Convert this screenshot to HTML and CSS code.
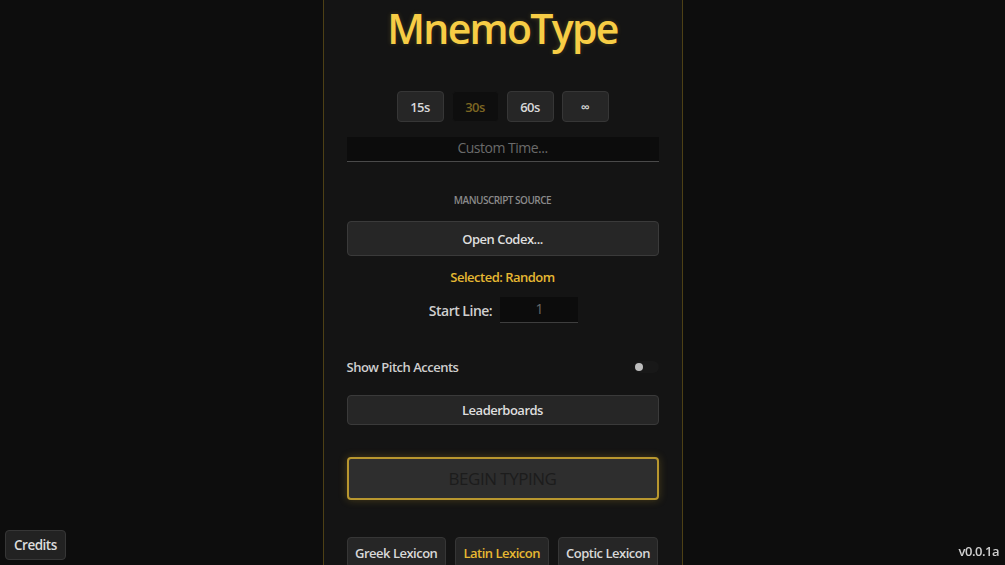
FILE: index.html
```html
<html>
<head>
  <title>MnemoType</title>
  <meta charset="UTF-8">
  <link rel="stylesheet" href="styles.css">
</head>
<body>
  <main class="panel">
    <h1 class="logo">MnemoType</h1>

    <div class="times">
      <button class="chip">15s</button>
      <button class="chip active">30s</button>
      <button class="chip">60s</button>
      <button class="chip">∞</button>
    </div>
    <input class="custom" type="text" placeholder="Custom Time...">

    <p class="section">MANUSCRIPT SOURCE</p>
    <button class="wide codex">Open Codex...</button>
    <p class="selected">Selected: Random</p>
    <div class="startline">
      <label>Start Line:</label>
      <input class="line" type="text" value="1">
    </div>

    <div class="toggle-row">
      <span>Show Pitch Accents</span>
      <span class="toggle"><span class="knob"></span></span>
    </div>
    <button class="wide boards">Leaderboards</button>

    <button class="begin">BEGIN TYPING</button>

    <div class="lexicons">
      <button class="chip lex">Greek Lexicon</button>
      <button class="chip lex current">Latin Lexicon</button>
      <button class="chip lex">Coptic Lexicon</button>
    </div>
  </main>

  <button class="credits">Credits</button>
  <span class="version">v0.0.1a</span>
</body>
</html>
```

FILE: styles.css
```css
html, body {
  height: 100%;
}
body {
  margin: 0;
  background: #0d0d0d;
  color: #d6d6d6;
  font-family: "Open Sans", "Noto Sans", sans-serif;
  letter-spacing: -0.5px;
  overflow: hidden;
}
button, input {
  font-family: inherit;
  font-weight: 600;
  letter-spacing: -0.5px;
}
.panel {
  box-sizing: border-box;
  width: 360px;
  min-height: 640px;
  margin: 0 auto;
  padding: 0 23px;
  background: #141414;
  border-left: 1px solid #4d4015;
  border-right: 1px solid #4d4015;
  display: flex;
  flex-direction: column;
  align-items: center;
}
.logo {
  margin: 3px 0 0;
  font-size: 41px;
  line-height: 50px;
  font-weight: 600;
  letter-spacing: -1.7px;
  color: #f7cd45;
  text-shadow: 0 0 5px rgba(247, 205, 69, 0.2);
}
.times {
  display: flex;
  gap: 8px;
  margin-top: 38px;
}
.chip {
  flex: none;
  height: 31px;
  min-width: 47px;
  padding: 0 10px;
  background: #262626;
  border: 1px solid #363636;
  border-radius: 4px;
  color: #d8d8d8;
  font-size: 13px;
  white-space: nowrap;
}
.chip.active {
  background: #0e0e0e;
  border-color: #141414;
  color: #7d6622;
}
.custom {
  box-sizing: border-box;
  width: 100%;
  height: 25px;
  margin-top: 15px;
  padding: 0 0 3px;
  background: #0c0c0c;
  border: 0;
  border-bottom: 1px solid #4a4a4a;
  text-align: center;
  font-size: 14px;
  font-weight: 400;
  color: #ccc;
  outline: none;
}
.custom::placeholder {
  color: #6a6a6a;
}
.section {
  margin: 31px 0 0;
  font-size: 10px;
  line-height: 14px;
  font-weight: 600;
  color: #8a8a8a;
}
.wide {
  width: 100%;
  background: #262626;
  border: 1px solid #3a3a3a;
  border-radius: 4px;
  color: #dedede;
  font-size: 13px;
}
.codex {
  height: 35px;
  margin-top: 14px;
}
.selected {
  margin: 12px 0 0;
  font-size: 13px;
  line-height: 18px;
  font-weight: 600;
  color: #e6b832;
}
.startline {
  display: flex;
  align-items: center;
  gap: 8px;
  margin-top: 11px;
  margin-left: 2px;
  font-size: 14px;
  font-weight: 600;
  color: #cfcfcf;
}
.line {
  box-sizing: border-box;
  width: 78px;
  height: 26px;
  padding: 0 0 2px;
  background: #0c0c0c;
  border: 0;
  border-bottom: 1px solid #3e3e3e;
  text-align: center;
  font-size: 14px;
  font-weight: 400;
  color: #6a6a6a;
  outline: none;
}
.toggle-row {
  width: 100%;
  display: flex;
  justify-content: space-between;
  align-items: center;
  margin-top: 35px;
  font-size: 13px;
  font-weight: 600;
  color: #cfcfcf;
}
.toggle {
  width: 24px;
  height: 12px;
  border-radius: 6px;
  background: #181818;
  display: flex;
  align-items: center;
  padding-left: 1px;
}
.knob {
  width: 8px;
  height: 8px;
  border-radius: 50%;
  background: #bdbdbd;
}
.boards {
  height: 30px;
  margin-top: 19px;
}
.begin {
  width: 100%;
  height: 43px;
  margin-top: 32px;
  background: #2e2e2e;
  border: 2px solid #b8972f;
  border-radius: 4px;
  box-shadow: 0 0 8px rgba(200, 160, 40, 0.3);
  color: #1c1c1c;
  font-size: 17px;
  font-weight: 400;
}
.lexicons {
  width: 100%;
  display: flex;
  gap: 9px;
  margin-top: 37px;
}
.lex {
  flex: 1 1 auto;
  padding: 0 6px;
}
.lex.current {
  color: #e6b832;
}
.credits {
  position: fixed;
  left: 5px;
  bottom: 5px;
  height: 30px;
  padding: 0 8px;
  background: #222;
  border: 1px solid #363636;
  border-radius: 4px;
  color: #dcdcdc;
  font-size: 13.5px;
}
.version {
  position: fixed;
  right: 6px;
  bottom: 5px;
  font-size: 13px;
  font-weight: 600;
  color: #cfcfcf;
}
```
